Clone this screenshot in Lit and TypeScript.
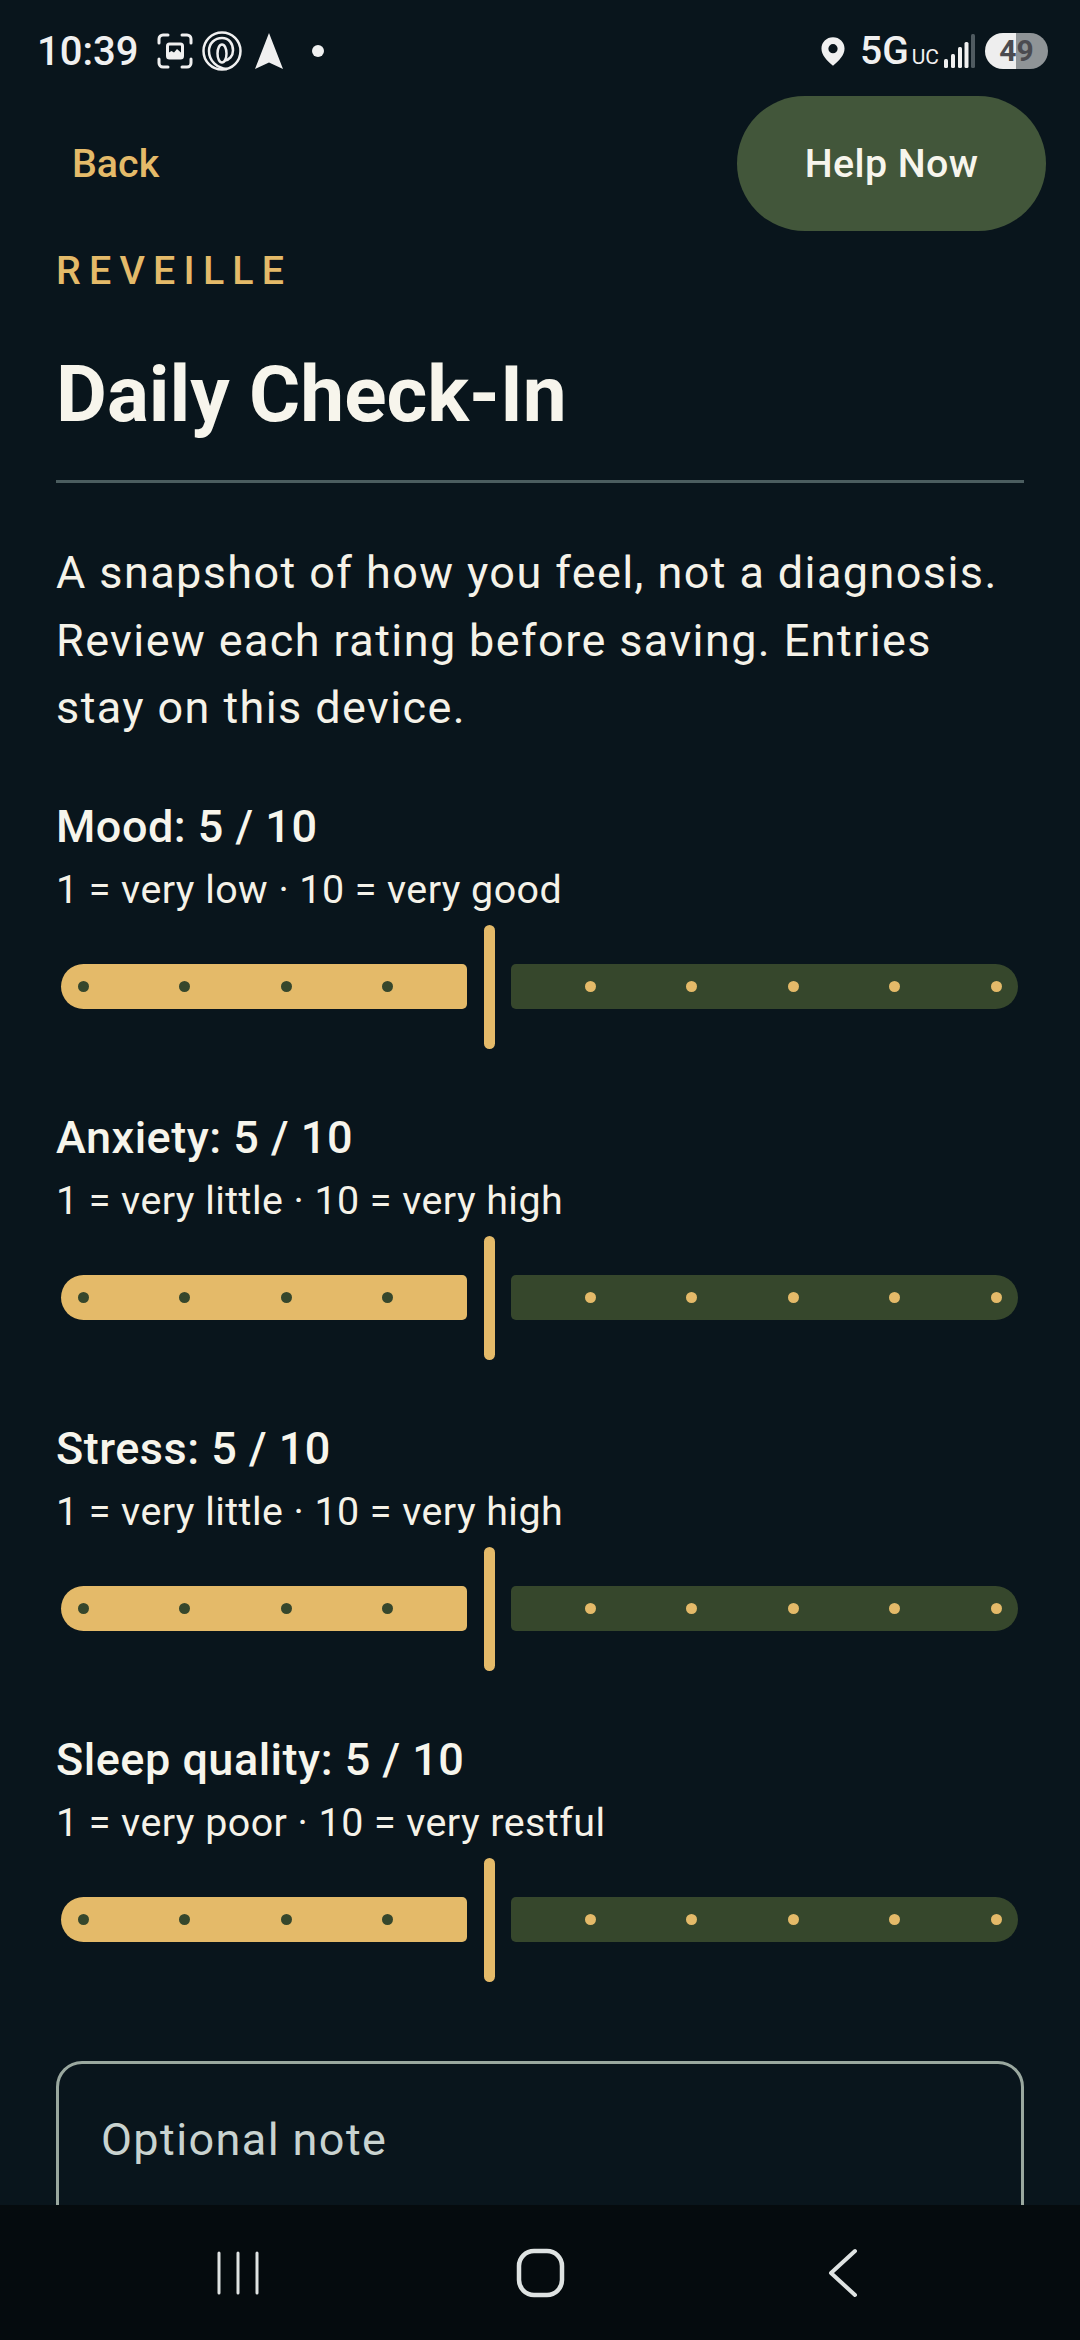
import { LitElement, html, css, svg } from 'lit';
import { customElement } from 'lit/decorators.js';

const RATINGS = [
  { name: 'Mood', hint: '1 = very low · 10 = very good' },
  { name: 'Anxiety', hint: '1 = very little · 10 = very high' },
  { name: 'Stress', hint: '1 = very little · 10 = very high' },
  { name: 'Sleep quality', hint: '1 = very poor · 10 = very restful' },
];

const VALUE = 5;

@customElement('rating-slider')
export class RatingSlider extends LitElement {
  static styles = css`
    :host {
      display: flex;
      align-items: center;
      height: 124px;
      padding: 0 6px 0 5px;
    }
    .track {
      height: 45px;
      display: flex;
      align-items: center;
      gap: 90.5px;
    }
    .done {
      width: 406px;
      background: #e4ba69;
      border-radius: 23px 5px 5px 23px;
      padding-left: 16.5px;
      box-sizing: border-box;
    }
    .todo {
      flex: 1;
      background: #36472c;
      border-radius: 5px 23px 23px 5px;
      padding-right: 16.5px;
      justify-content: flex-end;
    }
    .thumb {
      width: 11px;
      height: 124px;
      margin: 0 16px 0 17px;
      background: #e4ba69;
      border-radius: 6px;
      flex: none;
    }
    i {
      width: 11px;
      height: 11px;
      border-radius: 50%;
      flex: none;
    }
    .done i {
      background: #36472c;
    }
    .todo i {
      background: #e4ba69;
    }
  `;

  render() {
    const low = Array.from({ length: VALUE - 1 });
    const high = Array.from({ length: 10 - VALUE });
    return html`
      <div class="track done">${low.map(() => html`<i></i>`)}</div>
      <div class="thumb"></div>
      <div class="track todo">${high.map(() => html`<i></i>`)}</div>
    `;
  }
}

@customElement('app-root')
export class AppRoot extends LitElement {
  static styles = css`
    :host {
      display: block;
      font-family: Roboto, 'Noto Sans', sans-serif;
    }
    .page {
      height: 2340px;
      display: flex;
      flex-direction: column;
      background: #09151c;
      color: #f7f5ec;
      overflow: hidden;
    }

    .status {
      height: 96px;
      flex: none;
      display: flex;
      align-items: center;
      padding: 6px 32px 0 37px;
      box-sizing: border-box;
      color: #f0f0f0;
    }
    .time {
      font-size: 40px;
      font-weight: 500;
      margin-right: 19px;
    }
    .status svg {
      display: block;
      flex: none;
    }
    .spacer {
      flex: 1;
    }
    .net {
      display: flex;
      align-items: baseline;
      font-size: 39px;
      font-weight: 500;
      margin-left: 15px;
    }
    .uc {
      font-size: 21px;
      font-weight: 400;
      margin: 0 5px 0 3px;
    }
    .battery {
      width: 63px;
      height: 36px;
      margin-left: 10px;
      border-radius: 18px;
      background: linear-gradient(90deg, #eeeeee 0 31px, #8f9497 31px);
      color: #4b4b50;
      font-size: 30px;
      font-weight: 700;
      line-height: 36px;
      text-align: center;
    }

    .top {
      height: 135px;
      flex: none;
      display: flex;
      align-items: center;
      justify-content: space-between;
      padding: 0 34px 0 72px;
    }
    .back {
      color: #e4ba69;
      font-size: 39.4px;
      font-weight: 500;
    }
    .help {
      width: 309px;
      height: 135px;
      border-radius: 68px;
      background: #42563a;
      display: flex;
      align-items: center;
      justify-content: center;
      font-size: 39.4px;
      font-weight: 500;
      letter-spacing: 0.4px;
    }

    main {
      flex: 1;
      min-height: 0;
      overflow: hidden;
      padding: 18px 56px 0;
    }
    .eyebrow {
      color: #e4ba69;
      font-size: 39.4px;
      font-weight: 500;
      line-height: 44px;
      letter-spacing: 8.2px;
    }
    h1 {
      margin: 55px 0 0;
      font-size: 78.3px;
      font-weight: 700;
      line-height: 92px;
    }
    hr {
      margin: 40px 0 0;
      border: 0;
      height: 3px;
      background: #4b5d5f;
    }
    .intro {
      margin: 56px 0 0;
      font-size: 45px;
      line-height: 67.5px;
      letter-spacing: 1.4px;
      color: #f5f2e8;
    }
    .rating {
      height: 311px;
    }
    .ratings {
      margin-top: 55px;
    }
    .label {
      font-size: 45px;
      font-weight: 500;
      letter-spacing: 0.5px;
      line-height: 60px;
    }
    .hint {
      font-size: 39.4px;
      letter-spacing: 0.45px;
      line-height: 60px;
      color: #f5f2e8;
      margin-top: 3px;
    }
    .rating rating-slider {
      margin-top: 5px;
    }
    .note {
      height: 300px;
      margin-top: 20px;
      border: 3px solid #9aa89f;
      border-radius: 26px;
      padding: 48px 42px;
      box-sizing: border-box;
      font-size: 45px;
      line-height: 56px;
      letter-spacing: 1.4px;
      color: #c9d3d0;
    }

    .nav {
      height: 135px;
      flex: none;
      background: #050b0e;
    }
    .nav svg {
      display: block;
    }
  `;

  private statusLeft() {
    return html`
      <svg width="36" height="36" viewBox="0 0 36 36" fill="none" stroke="currentColor" stroke-width="3" stroke-linecap="round">
        <path d="M2 10V6a4 4 0 0 1 4-4h5M25 2h5a4 4 0 0 1 4 4v4M34 26v4a4 4 0 0 1-4 4h-5M11 34H6a4 4 0 0 1-4-4v-4" />
        <rect x="10.500" y="11" width="15" height="14" rx="2" />
        <path fill="currentColor" stroke="none" d="M11 24v-4l3.500-2 2.500 1.500 3-3.500 5 4.500V24z" />
      </svg>
      <svg style="margin-left:9px" width="40" height="40" viewBox="0 0 40 40" fill="none" stroke="currentColor" stroke-width="2.500">
        <circle cx="20" cy="20" r="18.500" />
        <path d="M25 38C15 37 7 30 7 20 7 12 13 7 20 7s11 5.500 11 12.500c0 5.500-4 9.500-8 10" />
        <ellipse cx="20" cy="22.500" rx="4.500" ry="9" />
      </svg>
      <svg style="margin-left:12px" width="30" height="36" viewBox="0 0 30 36">
        <path fill="currentColor" d="M15 0l14 36-14-6.500L1 36z" />
      </svg>
      <svg style="margin-left:27px" width="14" height="14" viewBox="0 0 14 14">
        <circle fill="currentColor" cx="7" cy="7" r="6" />
      </svg>
    `;
  }

  private statusRight() {
    return html`
      <svg width="24" height="31" viewBox="0 0 26 31">
        <path fill="currentColor" fill-rule="evenodd" d="M13 0c7 0 12.500 5.300 12.500 12.200 0 7-5.600 13-12.500 18.800C6.100 25.200.500 19.200.500 12.200.500 5.300 6 0 13 0zm0 7.500a5 5 0 1 0 0 10 5 5 0 0 0 0-10z" />
      </svg>
      <div class="net">5G<span class="uc">UC</span></div>
      <svg width="31" height="34" viewBox="0 0 31 34">
        ${[[0, 25, 9], [7, 20, 14], [14, 13, 21], [20.500, 8, 26]].map(([x, y, h]) => svg`<rect fill="currentColor" x=${x} y=${y} width="4" height=${h} rx="1.500" />`)}
        <rect fill="#4f5a60" x="27" y="0" width="4" height="34" rx="1.500" />
      </svg>
      <div class="battery">49</div>
    `;
  }

  render() {
    return html`
      <div class="page">
        <div class="status">
          <span class="time">10:39</span>
          ${this.statusLeft()}
          <span class="spacer"></span>
          ${this.statusRight()}
        </div>
        <div class="top">
          <span class="back">Back</span>
          <span class="help">Help Now</span>
        </div>
        <main>
          <div class="eyebrow">REVEILLE</div>
          <h1>Daily Check-In</h1>
          <hr />
          <p class="intro">A snapshot of how you feel, not a diagnosis. Review each rating before saving. Entries stay on this device.</p>
          <div class="ratings">
            ${RATINGS.map(
              (r) => html`
                <section class="rating">
                  <div class="label">${r.name}: ${VALUE} / 10</div>
                  <div class="hint">${r.hint}</div>
                  <rating-slider></rating-slider>
                </section>
              `,
            )}
          </div>
          <div class="note">Optional note</div>
        </main>
        <div class="nav">
          <svg width="1080" height="135" viewBox="0 0 1080 135" fill="none" stroke="#dfe3e2" stroke-linecap="round">
            <path stroke-width="3" d="M219 48v40M238 48v40M257 48v40" />
            <rect stroke-width="4.500" x="519" y="46" width="43" height="44" rx="15" />
            <path stroke-width="4" stroke-linejoin="round" d="M855 46L831 68l24 22" />
          </svg>
        </div>
      </div>
    `;
  }
}
